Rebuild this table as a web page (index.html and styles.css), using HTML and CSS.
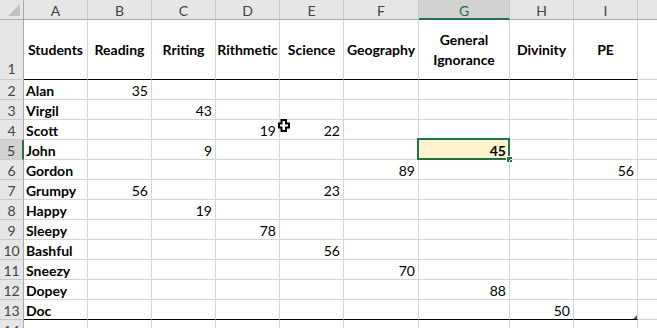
FILE: index.html
```html
<!DOCTYPE html>
<html lang="en">
<head>
  <meta charset="UTF-8" />
  <title>Students</title>
  <link rel="stylesheet" href="styles.css">
</head>
<body>
  <div class="sheet" id="sheet"></div>

  <!-- マウスカーソル -->
  <svg class="cursor" width="12" height="13" viewBox="0 0 12 13">
    <polygon points="3.5,1 8,1 8,4.5 11,4.5 11,8.5 8,8.5 8,12 3.5,12 3.5,8.5 1,8.5 1,4.5 3.5,4.5" fill="#fff" stroke="#000" stroke-width="2"/>
  </svg>

  <script>
    // J列は画面外なので見出し文字は出さない
    const cols = ['A', 'B', 'C', 'D', 'E', 'F', 'G', 'H', 'I', ''];
    const titles = ['Students', 'Reading', 'Rriting', 'Rithmetic', 'Science', 'Geography', 'General Ignorance', 'Divinity', 'PE', ''];
    const data = [
      ['Alan', { B: 35 }],
      ['Virgil', { C: 43 }],
      ['Scott', { D: 19, E: 22 }],
      ['John', { C: 9, G: 45 }],
      ['Gordon', { F: 89, I: 56 }],
      ['Grumpy', { B: 56, E: 23 }],
      ['Happy', { C: 19 }],
      ['Sleepy', { D: 78 }],
      ['Bashful', { E: 56 }],
      ['Sneezy', { F: 70 }],
      ['Dopey', { G: 88 }],
      ['Doc', { H: 50 }],
      ['', {}]
    ];
    const sheet = document.getElementById('sheet');

    function cell(cls, text) {
      const div = document.createElement('div');
      div.className = 'cell ' + cls;
      div.textContent = text;
      sheet.appendChild(div);
      return div;
    }

    // 列見出し
    cell('corner', '');
    cols.forEach(c => cell('col-head' + (c === 'G' ? ' active' : ''), c));

    // 1行目 (タイトル)
    cell('row-head row-tall', '1');
    titles.forEach((t, i) => cell('title' + (i < 9 ? ' rule' : ''), t));

    // データ行
    data.forEach((row, r) => {
      const n = r + 2;
      cell('row-head' + (n === 5 ? ' active' : ''), n);
      const ruled = n === 13;
      cell('name' + (ruled ? ' rule' : ''), row[0]);
      cols.slice(1).forEach((c, i) => {
        const v = row[1][c];
        const div = cell('num' + (ruled && i < 8 ? ' rule' : ''), v === undefined ? '' : v);
        if (n === 5 && c === 'G') {
          div.classList.add('selected');
          const box = document.createElement('span');
          box.className = 'sel-box';
          box.innerHTML = '<span class="handle"></span>';
          div.appendChild(box);
        }
        if (ruled && c === 'I') {
          const mark = document.createElement('span');
          mark.className = 'resize-mark';
          div.appendChild(mark);
        }
      });
    });
  </script>
</body>
</html>
```

FILE: styles.css
```css
/* 全体 */
body {
  margin: 0;
  background: #fff;
  font-family: 'Lato', 'Liberation Sans', sans-serif;
  overflow: hidden;
  position: relative;
  width: 657px;
  height: 328px;
}

/* シートのグリッド */
.sheet {
  display: grid;
  grid-template-columns: 24px 64px 64px 64px 64px 64px 75px 91px 64px 64px 64px;
  grid-template-rows: 20px 60px repeat(14, 20px);
}

.cell {
  box-sizing: border-box;
  border-right: 1px solid #d4d4d4;
  border-bottom: 1px solid #d4d4d4;
  font-size: 14px;
  line-height: 19px;
  padding: 1px 2px 0;
  white-space: nowrap;
  color: #000;
  position: relative;
}

/* 見出し */
.corner {
  background: #e6e6e6;
  border-right-color: #ababab;
  border-bottom-color: #ababab;
}
.corner::after {
  content: '';
  position: absolute;
  right: 3px;
  bottom: 3px;
  border-left: 12px solid transparent;
  border-bottom: 12px solid #c2c2c2;
}
.col-head {
  background: #e6e6e6;
  border-right-color: #c8c8c8;
  border-bottom-color: #ababab;
  text-align: center;
  color: #444;
}
.col-head.active {
  background: #d2d2d2;
  border-bottom: 2px solid #217346;
  color: #217346;
}
.row-head {
  background: #e6e6e6;
  border-right-color: #ababab;
  border-bottom-color: #c8c8c8;
  text-align: center;
  color: #444;
  padding: 1px 0 0;
}
.row-head.active {
  background: #d2d2d2;
  border-right: 2px solid #217346;
}
.row-tall {
  display: flex;
  align-items: flex-end;
  justify-content: center;
  padding-bottom: 1px;
}

/* タイトル行 */
.title {
  display: flex;
  align-items: center;
  justify-content: center;
  text-align: center;
  white-space: normal;
  font-weight: bold;
  line-height: 20px;
  padding: 0 1px;
}
.rule {
  border-bottom-color: #000;
}

/* 名前と数値 */
.name {
  font-weight: bold;
}
.num {
  text-align: right;
  padding-right: 3px;
}

/* 選択セル */
.selected {
  background: #fff2cc;
  font-weight: bold;
}
.sel-box {
  position: absolute;
  top: -2px;
  left: -2px;
  right: -1px;
  bottom: -1px;
  border: 2px solid #217346;
}
.handle {
  position: absolute;
  right: -5px;
  bottom: -5px;
  width: 5px;
  height: 5px;
  background: #217346;
  border: 1px solid #fff;
}

/* テーブル右下のマーク */
.resize-mark {
  position: absolute;
  right: 0;
  bottom: 0;
  border-left: 4px solid transparent;
  border-bottom: 4px solid #4450b4;
}

.cursor {
  position: absolute;
  left: 278px;
  top: 119px;
}
```
